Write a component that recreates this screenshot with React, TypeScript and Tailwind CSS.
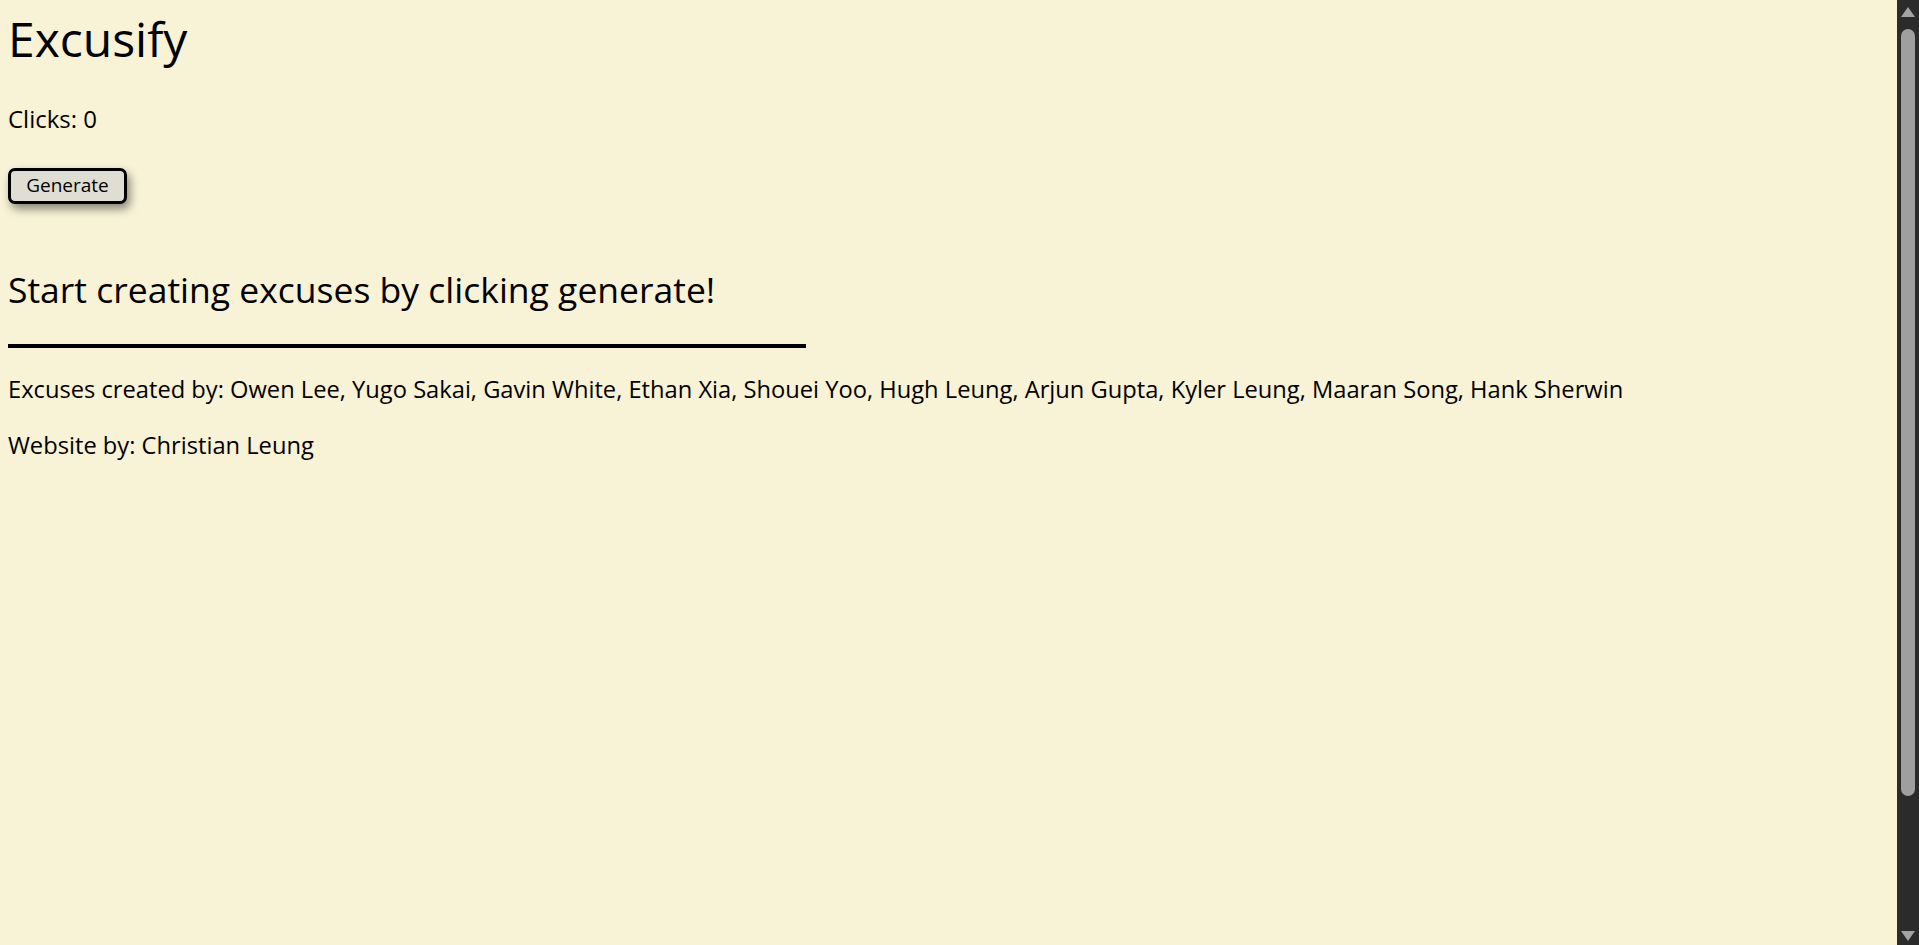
import { useState } from 'react';

const App = () => {
    const [clicks, setClicks] = useState(0);

    return (
        <div className="flex h-screen overflow-hidden bg-[#f8f2d6] text-black font-['Open_Sans',sans-serif]">
            <div className="flex-1 px-2 pt-[1px]">
                <h1 className="text-[48px] leading-[1.2] mt-[9px]">Excusify</h1>
                <p className="text-[24px] leading-[1.5] mt-[33px]">Clicks: {clicks}</p>
                <button
                    onClick={() => setClicks(clicks + 1)}
                    className="mt-[31px] w-[119px] h-[36px] bg-[#e0ded3] border-[3px] border-black rounded-[7px] text-[19px] leading-none shadow-[3px_5px_10px_rgba(0,0,0,0.45)]"
                >
                    Generate
                </button>
                <h2 className="text-[35.5px] leading-[1.5] mt-[59px]">Start creating excuses by clicking generate!</h2>
                <div className="w-[798px] h-[4px] bg-black mt-[28px]"></div>
                <p className="text-[23.7px] leading-[1.5] mt-[24px]">Excuses created by: Owen Lee, Yugo Sakai, Gavin White, Ethan Xia, Shouei Yoo, Hugh Leung, Arjun Gupta, Kyler Leung, Maaran Song, Hank Sherwin</p>
                <p className="text-[23.7px] leading-[1.5] mt-[21px]">Website by: Christian Leung</p>
            </div>
            {/* fake scrollbar */}
            <div className="w-[22px] bg-[#2b2b2b] flex flex-col items-center">
                <svg width="14" height="10" viewBox="0 0 14 10" className="mt-[7px]">
                    <path d="M7 0 L14 10 L0 10 Z" fill="#a3a3a3" />
                </svg>
                <div className="w-[14px] h-[767px] mt-[12px] rounded-[7px] bg-[#9f9f9f]"></div>
                <div className="flex-1"></div>
                <svg width="14" height="10" viewBox="0 0 14 10" className="mb-[4px]">
                    <path d="M0 0 L14 0 L7 10 Z" fill="#a3a3a3" />
                </svg>
            </div>
        </div>
    )
};

export default App;
